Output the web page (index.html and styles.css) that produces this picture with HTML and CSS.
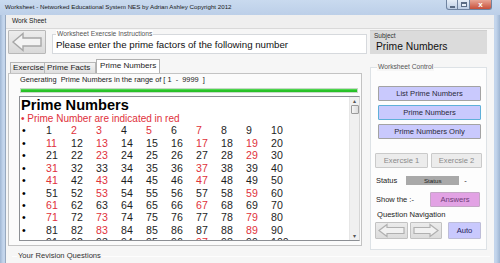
FILE: index.html
```html
<!DOCTYPE html>
<html lang="en">
<head>
    <meta charset="UTF-8">
    <title>Worksheet</title>
    <link rel="stylesheet" href="styles.css">
</head>
<body>
<div class="window">
    <div class="titlebar">
        <span class="title">Worksheet - Networked Educational System NES by Adrian Ashley Copyright 2012</span>
        <div class="controls">
            <span class="ctl ctl-min"><i></i></span>
            <span class="ctl ctl-max"><i></i></span>
            <span class="ctl ctl-close">x</span>
        </div>
    </div>
    <div class="client">
        <div class="outer-head">Work Sheet</div>
        <div class="outer-page">
            <div class="top-row">
                <div class="back-btn">
                    <svg width="36" height="22" viewBox="0 0 36 22"><polygon points="4,11 14,2.5 14,7 32,7 32,15 14,15 14,19.5" fill="#f3f3f3" stroke="#a6a6a6" stroke-width="1.4"/></svg>
                </div>
                <div class="group instr">
                    <span class="group-title">Worksheet Exercsie Instructions</span>
                    <div class="instr-text">Please enter the prime factors of the following number</div>
                </div>
                <div class="subject">
                    <div class="subject-title">Subject</div>
                    <div class="subject-text">Prime Numbers</div>
                </div>
            </div>

            <div class="main-row">
                <div class="left-col">
                    <div class="tabs">
                        <span class="tab tab-ex">Exercise</span>
                        <span class="tab tab-facts">Prime Facts</span>
                        <span class="tab tab-primes active">Prime Numbers</span>
                    </div>
                    <div class="tab-panel">
                        <div class="gen">Generating  Prime Numbers in the range of [ 1  -  9999  ]</div>
                        <div class="progress"></div>
                        <div class="listbox">
                            <div class="list-content">
                                <div class="list-head">Prime Numbers</div>
                                <div class="list-note">• Prime Number are indicated in red</div>
                                <div class="num-row"><span>•</span><span>1</span><span class="p">2</span><span class="p">3</span><span>4</span><span class="p">5</span><span>6</span><span class="p">7</span><span>8</span><span>9</span><span>10</span></div>
                                <div class="num-row"><span>•</span><span class="p">11</span><span>12</span><span class="p">13</span><span>14</span><span>15</span><span>16</span><span class="p">17</span><span>18</span><span class="p">19</span><span>20</span></div>
                                <div class="num-row"><span>•</span><span>21</span><span>22</span><span class="p">23</span><span>24</span><span>25</span><span>26</span><span>27</span><span>28</span><span class="p">29</span><span>30</span></div>
                                <div class="num-row"><span>•</span><span class="p">31</span><span>32</span><span>33</span><span>34</span><span>35</span><span>36</span><span class="p">37</span><span>38</span><span>39</span><span>40</span></div>
                                <div class="num-row"><span>•</span><span class="p">41</span><span>42</span><span class="p">43</span><span>44</span><span>45</span><span>46</span><span class="p">47</span><span>48</span><span>49</span><span>50</span></div>
                                <div class="num-row"><span>•</span><span>51</span><span>52</span><span class="p">53</span><span>54</span><span>55</span><span>56</span><span>57</span><span>58</span><span class="p">59</span><span>60</span></div>
                                <div class="num-row"><span>•</span><span class="p">61</span><span>62</span><span>63</span><span>64</span><span>65</span><span>66</span><span class="p">67</span><span>68</span><span>69</span><span>70</span></div>
                                <div class="num-row"><span>•</span><span class="p">71</span><span>72</span><span class="p">73</span><span>74</span><span>75</span><span>76</span><span>77</span><span>78</span><span class="p">79</span><span>80</span></div>
                                <div class="num-row"><span>•</span><span>81</span><span>82</span><span class="p">83</span><span>84</span><span>85</span><span>86</span><span>87</span><span>88</span><span class="p">89</span><span>90</span></div>
                                <div class="num-row"><span>•</span><span>91</span><span>92</span><span>93</span><span>94</span><span>95</span><span>96</span><span class="p">97</span><span>98</span><span>99</span><span>100</span></div>
                            </div>
                            <div class="scrollbar">
                                <span class="sb-arrow">&#9652;</span>
                                <span class="sb-thumb"></span>
                                <span class="sb-fill"></span>
                                <span class="sb-arrow">&#9662;</span>
                            </div>
                        </div>
                    </div>
                </div>

                <div class="group control">
                    <span class="group-title">Worksheet Control</span>
                    <div class="btn btn-list btn-first">List Prime Numbers</div>
                    <div class="btn btn-list btn-focus">Prime Numbers</div>
                    <div class="btn btn-list">Prime Numbers Only</div>
                    <div class="ex-row">
                        <div class="btn btn-ex ex1">Exercsie 1</div>
                        <div class="btn btn-ex ex2">Exercsie 2</div>
                    </div>
                    <div class="status-row">
                        <span class="label">Status</span>
                        <span class="status-box">Status</span>
                        <span class="dash">-</span>
                    </div>
                    <div class="show-row">
                        <span class="label">Show the :-</span>
                        <div class="btn btn-answers">Answers</div>
                    </div>
                    <div class="nav-title">Question Navigation</div>
                    <div class="nav-row">
                        <div class="btn btn-nav">
                            <svg width="31" height="15" viewBox="0 0 31 15"><polygon points="3,7.5 11,1.5 11,4.5 28,4.5 28,10.5 11,10.5 11,13.5" fill="#f1f1f1" stroke="#b0b0b0" stroke-width="1.2"/></svg>
                        </div>
                        <div class="btn btn-nav">
                            <svg width="30" height="15" viewBox="0 0 30 15"><polygon points="27,7.5 19,1.5 19,4.5 3,4.5 3,10.5 19,10.5 19,13.5" fill="#f1f1f1" stroke="#b0b0b0" stroke-width="1.2"/></svg>
                        </div>
                        <div class="btn btn-auto">Auto</div>
                    </div>
                </div>
            </div>

            <div class="revision">
                <span class="group-title">Your Revision Questions</span>
            </div>
        </div>
    </div>
</div>
</body>
</html>
```

FILE: styles.css
```css
*{margin: 0;padding: 0;box-sizing: border-box;}
body{width: 500px;height: 263px;overflow: hidden;font-family: "Liberation Sans", Arial, sans-serif;color: #1c1c1c;background: #b9cde6;}

.window{width: 500px;height: 263px;display: flex;flex-direction: column;background: linear-gradient(90deg, #9fb6d3 0, #c3d5ec 3px, #c3d5ec 496px, #9fb6d3 500px);}

/* title bar */
.titlebar{height: 15px;display: flex;padding-left: 5px;background: linear-gradient(#c9daef, #bccfe8);}
.title{font-size: 6.2px;line-height: 14px;color: #1a1a1a;white-space: nowrap;}
.controls{margin-left: auto;margin-right: 8px;display: flex;height: 10px;}
.ctl{display: flex;align-items: center;justify-content: center;height: 10px;border: 1px solid #6f83a0;border-top: none;background: linear-gradient(#e6eef8, #bccde4);}
.ctl-min{width: 12px;border-radius: 0 0 0 3px;}
.ctl-max{width: 12px;border-left: none;}
.ctl-close{width: 22px;border-left: none;border-radius: 0 0 3px 0;background: linear-gradient(#e9a594, #c7503a);color: #fff;font-size: 8px;font-weight: bold;line-height: 8px;}
.ctl-min i{width: 5px;height: 2px;margin-top: 4px;background: #fff;border: 1px solid #5a6b84;}
.ctl-max i{width: 6px;height: 5px;border: 1px solid #5a6b84;border-top-width: 2px;background: #e8f0f9;}

/* client area */
.client{flex: 1;margin: 0 6px 0 5px;display: flex;flex-direction: column;background: #efefef;border-left: 1px solid #98a9bf;}
.outer-head{height: 13px;padding-left: 6px;font-size: 6.6px;line-height: 12px;color: #1a1a1a;}
.outer-page{flex: 1;border-top: 1px solid #d9d9d9;background: #f6f6f6;padding: 1px 0 0 2px;}

.top-row{display: flex;height: 24px;}
.back-btn{width: 38px;height: 24px;border: 1px solid #b8b8b8;border-radius: 1px;background: linear-gradient(#ececec, #d9d9d9);display: flex;align-items: center;justify-content: center;}

.group{border: 1px solid #d6d9dd;background: #fff;}
.group-title{display: block;width: fit-content;margin-top: -5px;margin-left: 3px;padding: 0 1px;font-size: 6.7px;line-height: 8px;color: #555;background: #f6f6f6;white-space: nowrap;}

.instr{margin-left: 6px;margin-top: 4px;width: 315px;height: 20px;}
.instr .group-title{background: #fff;}
.instr-text{margin-top: 1px;padding-left: 3px;font-size: 9.7px;line-height: 12px;color: #111;white-space: nowrap;}

.subject{margin-left: 3px;width: 117px;height: 24px;background: #dbdbdb;border-top: 1px solid #cfcfcf;padding-left: 4px;}
.subject-title{font-size: 6.5px;line-height: 8px;margin-top: 1px;color: #333;}
.subject-text{font-size: 10.3px;line-height: 12px;margin-top: 1px;padding-left: 2px;color: #111;}

/* main area */
.main-row{display: flex;margin-top: 5px;}
.left-col{width: 354px;display: flex;flex-direction: column;}

.tabs{display: flex;align-items: flex-end;height: 14px;padding-left: 2px;}
.tab{height: 11px;border: 1px solid #b7b7b7;border-bottom: none;background: linear-gradient(#f4f4f4, #dedede);font-size: 8.1px;line-height: 10px;padding-left: 2px;white-space: nowrap;}
.tab-ex{width: 35px;}
.tab-facts{width: 51px;border-left: none;}
.tab-primes{width: 64px;}
.tab.active{height: 14px;background: #fff;border-color: #b1b1b1;line-height: 12px;padding-left: 3px;margin-left: 0;}

.tab-panel{height: 173px;border: 1px solid #c3c3c3;background: #fbfbfb;padding: 1px 0 0 11px;}
.gen{font-size: 7.4px;line-height: 10px;white-space: pre;color: #222;}
.progress{margin-top: 3px;width: 338px;height: 5px;border: 1px solid #c5d8c5;background: linear-gradient(#5fe05f, #1fbd1f 60%, #2cc42c);}

.listbox{margin-top: 3px;margin-left: -1px;width: 341px;height: 145px;border: 1px solid #8c8f94;border-right-color: #d6d6d6;background: #fff;display: flex;overflow: hidden;}
.list-content{flex: 1;padding-left: 1px;overflow: hidden;}
.list-head{font-size: 14.6px;font-weight: bold;line-height: 16px;color: #000;}
.list-note{font-size: 10px;line-height: 11.3px;color: #e0313b;white-space: nowrap;}
.num-row{display: grid;grid-template-columns: repeat(11, 25px);font-size: 10.6px;line-height: 12.45px;color: #1e1e1e;}
.num-row span:first-child{padding-left: 1px;color: #000;}
.num-row .p{color: #e0313b;}

.scrollbar{width: 10px;display: flex;flex-direction: column;align-items: center;background: #f0f0f0;border-left: 1px solid #e6e6e6;}
.sb-arrow{font-size: 6px;line-height: 8px;color: #555;}
.sb-thumb{width: 8px;height: 9px;border: 1px solid #9b9b9b;border-radius: 1px;background: linear-gradient(90deg, #f5f5f5, #dcdcdc);}
.sb-fill{flex: 1;}

/* worksheet control */
.control{margin-left: 8px;margin-top: 8px;width: 117px;height: 183px;padding-left: 4px;border-color: #dde2e6;background: #fdfdfd;}
.control .group-title{background: #f6f6f6;margin-left: 2px;}
.btn{height: 15px;display: flex;align-items: center;justify-content: center;font-size: 7.6px;border: 1px solid #a3a3a3;border-radius: 1px;white-space: nowrap;}
.btn-list{margin-left: 3px;width: 103px;margin-top: 4px;background: #c9c9fd;color: #2a2a3a;}
.btn-first{margin-top: 15px;}
.btn-focus{border-color: #5fb0d9;}
.ex-row{display: flex;margin-top: 14px;}
.btn-ex{background: #ececec;border-color: #cacaca;color: #8a8a8a;}
.ex1{width: 53px;}
.ex2{width: 51px;margin-left: 3px;}

.status-row{display: flex;align-items: center;height: 10px;margin-top: 7px;font-size: 7.5px;}
.label{padding-left: 1px;font-size: 7.5px;white-space: nowrap;}
.status-box{margin-left: 9px;width: 53px;height: 9px;background: #a9a9a9;font-size: 6.2px;line-height: 9px;text-align: center;color: #222;}
.dash{margin-left: 5px;}

.show-row{display: flex;align-items: center;margin-top: 7px;}
.btn-answers{margin-left: 16px;width: 50px;background: #e2a2e4;border-color: #c4a8c6;color: #6e3d78;}
.nav-title{margin-top: 3px;padding-left: 2px;font-size: 7.6px;line-height: 10px;}
.nav-row{display: flex;margin-top: 2px;}
.btn-nav{width: 33px;height: 17px;background: linear-gradient(#ebebeb, #dcdcdc);border-color: #c2c2c2;}
.btn-nav + .btn-nav{margin-left: 2px;width: 32px;}
.btn-auto{margin-left: 6px;width: 33px;height: 17px;background: #c9c9fd;border-color: #bdbdd8;color: #1e1e5a;}

.revision{margin-top: 6px;margin-left: 4px;margin-right: 4px;border-top: 1px solid #fdfdfd;}
.revision .group-title{margin-left: 5px;font-size: 7.6px;color: #333;background: #f6f6f6;}
```
